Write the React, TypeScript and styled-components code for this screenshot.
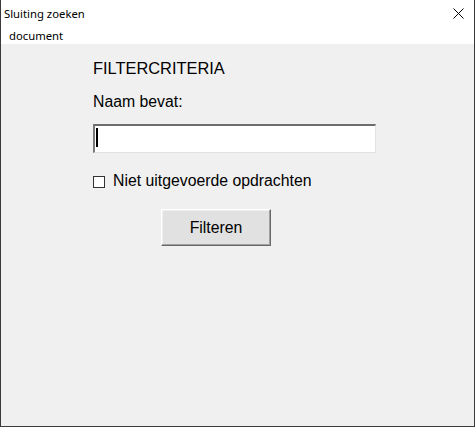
import React from 'react'
import styled, { createGlobalStyle } from 'styled-components'

const GlobalStyle = createGlobalStyle`
    html, body {
        margin: 0;
        padding: 0;
        background: #ffffff;
    }
    #root {
        width: 475px;
        height: 427px;
    }
`;

const Window = styled.div`
    box-sizing: border-box;
    width: 475px;
    height: 427px;
    display: flex;
    flex-direction: column;
    border: 1px solid #3a3a3a;
    border-top: none;
    background: #f0f0f0;
`;

const TitleBar = styled.div`
    height: 26px;
    display: flex;
    align-items: center;
    justify-content: space-between;
    padding: 0 10px 0 3px;
    background: #ffffff;
    font-family: "Noto Sans", sans-serif;
    font-size: 11.3px;
    color: #000000;
`;

const CloseIcon = styled.svg`
    width: 11px;
    height: 11px;
    margin-top: 1px;
`;

const MenuBar = styled.div`
    height: 18px;
    display: flex;
    align-items: center;
    padding-left: 8px;
    background: #ffffff;
    font-family: "Noto Sans", sans-serif;
    font-size: 11.3px;
    color: #000000;
`;

const Client = styled.div`
    flex: 1;
    display: flex;
    flex-direction: column;
    align-items: flex-start;
    padding: 15px 0 0 92px;
    font-family: "Liberation Sans", Arial, sans-serif;
    font-size: 15.8px;
    line-height: 18px;
    color: #000000;
`;

const Heading = styled.span`
    font-size: 16.4px;
`;

const FieldLabel = styled.span`
    margin-top: 16px;
`;

const TextBox = styled.div`
    box-sizing: border-box;
    margin-top: 13px;
    width: 283px;
    height: 29px;
    background: #ffffff;
    border-style: solid;
    border-width: 2px 1px 1px 2px;
    border-color: #6d6d6d #e3e3e3 #e3e3e3 #7a7a7a;
    padding: 2px 0 0 1px;
`;

const Caret = styled.div`
    width: 2px;
    height: 19px;
    background: #000000;
`;

const CheckRow = styled.label`
    margin-top: 19px;
    display: flex;
    align-items: center;
    gap: 8px;
`;

const CheckBox = styled.span`
    box-sizing: border-box;
    width: 12px;
    height: 12px;
    border: 1px solid #333333;
    background: #ffffff;
    margin-top: 1px;
`;

const Button = styled.button`
    box-sizing: border-box;
    margin: 19px 0 0 68px;
    width: 110px;
    height: 37px;
    padding: 0;
    background: #e1e1e1;
    border: 1px solid;
    border-color: #ffffff #696969 #696969 #ffffff;
    box-shadow: inset -1px -1px 0 #a0a0a0, inset 1px 1px 0 #f0f0f0;
    font-family: "Liberation Sans", Arial, sans-serif;
    font-size: 15.8px;
    color: #000000;
`;

export default function App() {
    return (
        <>
            <GlobalStyle />
            <Window>
                <TitleBar>
                    <span>Sluiting zoeken</span>
                    <CloseIcon viewBox="0 0 11 11">
                        <path d="M0.5 0.5 L10.5 10.5 M10.5 0.5 L0.5 10.5" stroke="#000" strokeWidth="1" fill="none" />
                    </CloseIcon>
                </TitleBar>
                <MenuBar>document</MenuBar>
                <Client>
                    <Heading>FILTERCRITERIA</Heading>
                    <FieldLabel>Naam bevat:</FieldLabel>
                    <TextBox>
                        <Caret />
                    </TextBox>
                    <CheckRow>
                        <CheckBox />
                        Niet uitgevoerde opdrachten
                    </CheckRow>
                    <Button>Filteren</Button>
                </Client>
            </Window>
        </>
    )
}
